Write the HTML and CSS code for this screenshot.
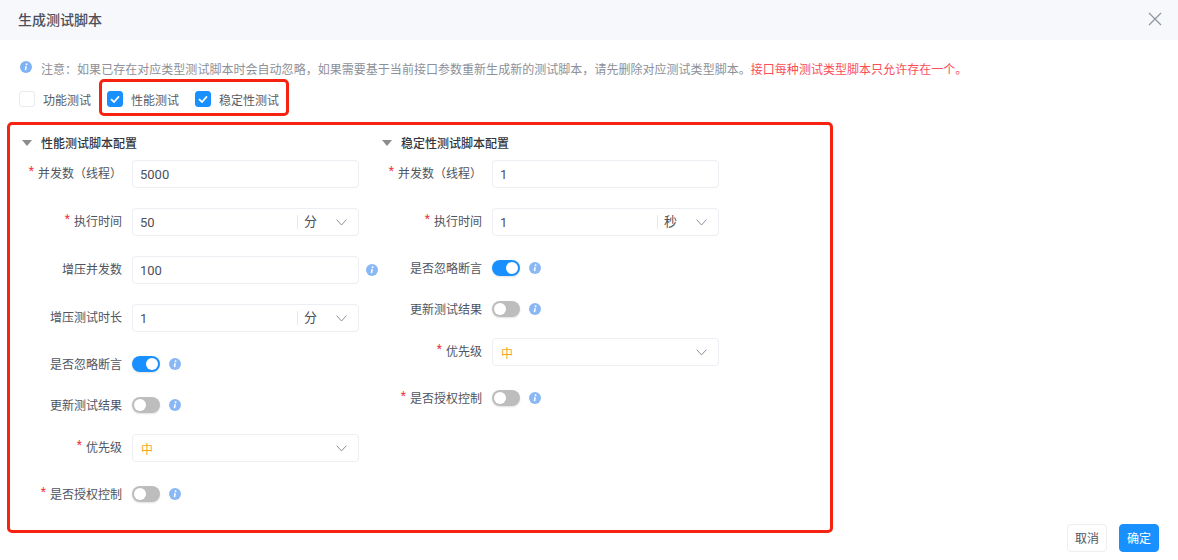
FILE: index.html
```html
<!DOCTYPE html>
<html lang="zh-CN">
<head>
<meta charset="utf-8">
<title>生成测试脚本</title>
<link rel="stylesheet" href="styles.css">
</head>
<body>
<svg class="defs" width="0" height="0" aria-hidden="true">
  <symbol id="info" viewBox="0 0 12 12">
    <circle cx="6" cy="6" r="6" fill="currentColor"/>
    <path d="M6.1 5.2 5.5 9.2" stroke="#fff" stroke-width="1.5" fill="none"/>
    <circle cx="6.6" cy="3.2" r="0.95" fill="#fff"/>
  </symbol>
  <symbol id="chev" viewBox="0 0 11 7">
    <path d="M.7.7 5.5 6 10.3.7" stroke="#8c9099" stroke-width="1" fill="none"/>
  </symbol>
  <symbol id="tick" viewBox="0 0 16 16">
    <path d="M4 8.2 7 11 12 5.4" stroke="#fff" stroke-width="1.8" fill="none"/>
  </symbol>
</svg>
<div class="dialog">
  <header class="head">
    <h1 class="title">生成测试脚本</h1>
    <svg class="close" viewBox="0 0 14 14"><path d="M1 1 13 13M13 1 1 13" stroke="#8f939b" stroke-width="1.2" fill="none"/></svg>
  </header>
  <div class="notice">
    <svg class="i i-top"><use href="#info"/></svg>
    <p class="notice-text">注意：如果已存在对应类型测试脚本时会自动忽略，如果需要基于当前接口参数重新生成新的测试脚本，请先删除对应测试类型脚本。<span class="danger">接口每种测试类型脚本只允许存在一个。</span></p>
  </div>
  <div class="checks">
    <label class="check"><span class="box"></span>功能测试</label>
    <label class="check"><span class="box on"><svg class="tick"><use href="#tick"/></svg></span>性能测试</label>
    <label class="check"><span class="box on"><svg class="tick"><use href="#tick"/></svg></span>稳定性测试</label>
    <div class="mark"></div>
  </div>
  <section class="panel">
    <div class="col">
      <h2 class="col-title"><span class="tri"></span>性能测试脚本配置</h2>
      <div class="row"><div class="lab"><em>*</em>并发数（线程）</div><div class="field">5000</div></div>
      <div class="row"><div class="lab"><em>*</em>执行时间</div><div class="field"><span class="val">50</span><span class="unit">分</span><svg class="chev"><use href="#chev"/></svg></div></div>
      <div class="row"><div class="lab">增压并发数</div><div class="field">100</div><svg class="i"><use href="#info"/></svg></div>
      <div class="row"><div class="lab">增压测试时长</div><div class="field"><span class="val">1</span><span class="unit">分</span><svg class="chev"><use href="#chev"/></svg></div></div>
      <div class="row sw-row"><div class="lab mid">是否忽略断言</div><span class="switch on"></span><svg class="i"><use href="#info"/></svg></div>
      <div class="row sw-row"><div class="lab mid">更新测试结果</div><span class="switch"></span><svg class="i"><use href="#info"/></svg></div>
      <div class="row sel-row"><div class="lab"><em>*</em>优先级</div><div class="field"><span class="val mid-pri">中</span><svg class="chev"><use href="#chev"/></svg></div></div>
      <div class="row sw-row last"><div class="lab mid"><em>*</em>是否授权控制</div><span class="switch"></span><svg class="i"><use href="#info"/></svg></div>
    </div>
    <div class="col">
      <h2 class="col-title"><span class="tri"></span>稳定性测试脚本配置</h2>
      <div class="row"><div class="lab"><em>*</em>并发数（线程）</div><div class="field">1</div></div>
      <div class="row"><div class="lab"><em>*</em>执行时间</div><div class="field"><span class="val">1</span><span class="unit">秒</span><svg class="chev"><use href="#chev"/></svg></div></div>
      <div class="row sw-row"><div class="lab mid">是否忽略断言</div><span class="switch on"></span><svg class="i"><use href="#info"/></svg></div>
      <div class="row sw-row"><div class="lab mid">更新测试结果</div><span class="switch"></span><svg class="i"><use href="#info"/></svg></div>
      <div class="row sel-row"><div class="lab"><em>*</em>优先级</div><div class="field"><span class="val mid-pri">中</span><svg class="chev"><use href="#chev"/></svg></div></div>
      <div class="row sw-row last"><div class="lab mid"><em>*</em>是否授权控制</div><span class="switch"></span><svg class="i"><use href="#info"/></svg></div>
    </div>
  </section>
  <footer class="foot">
    <button class="btn">取消</button>
    <button class="btn primary">确定</button>
  </footer>
</div>
</body>
</html>
```
FILE: styles.css
```css
* { box-sizing: border-box; }
html, body { margin: 0; padding: 0; height: 560px; overflow: hidden; background: #fff; }
body { font-family: Roboto, "Noto Sans CJK SC", sans-serif; font-size: 12px; color: #50545e; }
.defs { position: absolute; }
.dialog { display: flex; flex-direction: column; height: 560px; }

.head { height: 40px; background: #f7f8fc; display: flex; align-items: center; justify-content: space-between; padding: 0 16px 2px 18px; flex: none; }
.title { margin: 0; font-size: 14px; font-weight: 500; color: #4b4f59; }
.close { width: 14px; height: 14px; }

.notice { display: flex; align-items: center; height: 18px; margin: 19px 0 0 20px; }
.notice-text { margin: 0 0 0 9px; font-size: 12px; letter-spacing: .03px; color: #8d9098; white-space: nowrap; }
.danger { color: #fa4d56; }
.i { width: 12px; height: 12px; color: #8ab8f5; flex: none; margin-left: 7px; }
.i-top { margin-left: 0; color: #7fb3f5; margin-bottom: 3px; }

.checks { position: relative; display: flex; align-items: center; gap: 16px; height: 20px; margin: 12px 0 0 19px; }
.check { display: flex; align-items: center; gap: 8px; color: #585c66; }
.box { width: 16px; height: 16px; border: 1px solid #e9eaee; border-radius: 3px; background: #fff; }
.box.on { background: #1890ff; border-color: #1890ff; position: relative; }
.tick { position: absolute; left: -1px; top: -1px; width: 16px; height: 16px; }
.mark { position: absolute; left: 80px; top: -10px; width: 190px; height: 37px; border: 3px solid #f5230f; border-radius: 5px; }

.panel { display: flex; height: 411px; margin: 13px 0 0 7px; width: 826px; flex: none; border: 3px solid #f5230f; border-radius: 5px; padding: 9px 0 0 12px; }
.col { width: 360px; display: flex; flex-direction: column; }
.col-title { display: flex; align-items: center; height: 18px; margin: 0 0 8px; padding-bottom: 2px; font-size: 12px; font-weight: 500; color: #33363d; }
.tri { width: 0; height: 0; border-left: 5px solid transparent; border-right: 5px solid transparent; border-top: 6px solid #8c8c8c; margin: 2px 9px 0 0; }

.row { display: flex; align-items: center; height: 28px; margin-bottom: 20px; }
.sw-row { height: 24px; margin-bottom: 17px; }
.sel-row { margin-bottom: 20px; }
.lab { width: 100px; margin-right: 10px; flex: none; display: flex; justify-content: flex-end; align-items: flex-start; white-space: nowrap; color: #50545e; padding-bottom: 4px; }
.lab.mid { padding-bottom: 2px; }
.lab em { font-style: normal; color: #f5333f; margin-right: 4px; line-height: 14px; }

.field { width: 227px; height: 28px; border: 1px solid #eceef4; border-radius: 4px; display: flex; align-items: center; padding-left: 7px; font-size: 13px; color: #4c505a; flex: none; }
.val { flex: 1; }
.mid-pri { color: #f5a623; font-size: 12px; padding-left: 1px; }
.unit { width: 39px; height: 14px; line-height: 14px; border-left: 1px solid #e6e8ee; padding-left: 6px; font-size: 13px; }
.chev { width: 11px; height: 7px; margin: 0 11px 0 0; flex: none; }

.switch { position: relative; width: 28px; height: 16px; border-radius: 8px; background: #bdbdbd; flex: none; box-shadow: 0 1px 2px rgba(0, 0, 0, .12); }
.switch::after { content: ""; position: absolute; left: 2px; top: 2px; width: 12px; height: 12px; border-radius: 50%; background: #fff; }
.switch.on { background: #1890ff; }
.switch.on::after { left: 14px; }
.switch + .i { margin-left: 9px; }

.foot { display: flex; justify-content: flex-end; gap: 12px; margin-top: -9px; padding-right: 19px; }
.btn { width: 40px; height: 28px; padding: 0 0 2px; border: 1px solid #eceef1; border-radius: 4px; background: #fff; color: #50545e; font: 12px "Noto Sans CJK SC", sans-serif; }
.btn.primary { background: #1890ff; border-color: #1890ff; color: #fff; }
```
